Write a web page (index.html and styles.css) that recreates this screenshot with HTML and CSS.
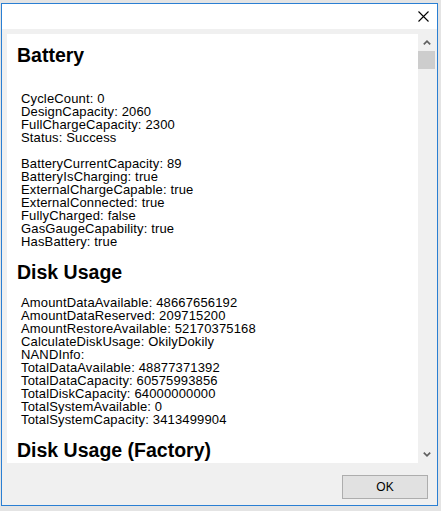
FILE: index.html
```html
<!DOCTYPE html>
<html>
<head>
<meta charset="utf-8">
<link rel="stylesheet" href="styles.css">
</head>
<body>
<div class="window">
  <div class="titlebar">
    <span class="close">
      <svg width="11" height="11" viewBox="0 0 11 11"><path d="M0.5 0.5 L10.5 10.5 M10.5 0.5 L0.5 10.5" stroke="#000" stroke-width="1.1" fill="none"/></svg>
    </span>
  </div>
  <div class="client">
    <div class="viewer">
      <div class="panel">
        <h2>Battery</h2>
        <p class="lead">CycleCount: 0<br>DesignCapacity: 2060<br>FullChargeCapacity: 2300<br>Status: Success</p>
        <p>BatteryCurrentCapacity: 89<br>BatteryIsCharging: true<br>ExternalChargeCapable: true<br>ExternalConnected: true<br>FullyCharged: false<br>GasGaugeCapability: true<br>HasBattery: true</p>
        <h2>Disk Usage</h2>
        <p>AmountDataAvailable: 48667656192<br>AmountDataReserved: 209715200<br>AmountRestoreAvailable: 52170375168<br>CalculateDiskUsage: OkilyDokily<br>NANDInfo:<br>TotalDataAvailable: 48877371392<br>TotalDataCapacity: 60575993856<br>TotalDiskCapacity: 64000000000<br>TotalSystemAvailable: 0<br>TotalSystemCapacity: 3413499904</p>
        <h2>Disk Usage (Factory)</h2>
      </div>
      <div class="scrollbar">
        <div class="arrow"><svg width="8" height="5" viewBox="0 0 8 5"><path d="M0.8 4.4 L4 1.2 L7.2 4.4" stroke="#606060" stroke-width="1.7" fill="none"/></svg></div>
        <div class="thumb"></div>
        <div class="track"></div>
        <div class="arrow"><svg width="8" height="5" viewBox="0 0 8 5"><path d="M0.8 0.6 L4 3.8 L7.2 0.6" stroke="#606060" stroke-width="1.7" fill="none"/></svg></div>
      </div>
    </div>
    <div class="actions">
      <button class="ok">OK</button>
    </div>
  </div>
</div>
</body>
</html>
```
FILE: styles.css
```css
html, body {
  margin: 0;
  height: 100%;
}
body {
  background: #e4e4e4;
  padding: 3px 3px 6px 1px;
  box-sizing: border-box;
  font-family: "Liberation Sans", Arial, sans-serif;
}
.window {
  width: 437px;
  height: 503px;
  box-sizing: border-box;
  border: 1px solid #2a7fd3;
  background: #f0f0f0;
  display: flex;
  flex-direction: column;
}
.titlebar {
  height: 25px;
  background: #fff;
  display: flex;
  justify-content: flex-end;
  align-items: center;
  padding-right: 8px;
}
.close {
  display: flex;
  width: 11px;
  height: 11px;
}
.client {
  flex: 1;
  display: flex;
  flex-direction: column;
  padding: 5px 2px 0 5px;
}
.viewer {
  display: flex;
  height: 429px;
}
.panel {
  flex: 1;
  background: #fff;
  overflow: hidden;
  padding: 0 10px;
  color: #000;
}
.panel h2 {
  font-size: 19.5px;
  line-height: 22px;
  font-weight: bold;
  margin: 13px 0;
}
.panel h2:first-child {
  margin-top: 10px;
}
.panel p {
  font-size: 13px;
  line-height: 13px;
  letter-spacing: 0.15px;
  margin: 13px 0 13px 4px;
  white-space: nowrap;
}
.panel p.lead {
  margin-top: 26px;
}
.scrollbar {
  width: 17px;
  display: flex;
  flex-direction: column;
  background: #f0f0f0;
}
.arrow {
  height: 17px;
  display: flex;
  align-items: center;
  justify-content: center;
}
.thumb {
  height: 18px;
  background: #cdcdcd;
}
.track {
  flex: 1;
}
.actions {
  display: flex;
  justify-content: flex-end;
  padding: 12px 7px 0 0;
}
.ok {
  width: 86px;
  height: 24px;
  box-sizing: border-box;
  border: 1px solid #adadad;
  background: #e1e1e1;
  font-family: "Liberation Sans", Arial, sans-serif;
  font-size: 12px;
  color: #000;
  padding: 0;
}
```
